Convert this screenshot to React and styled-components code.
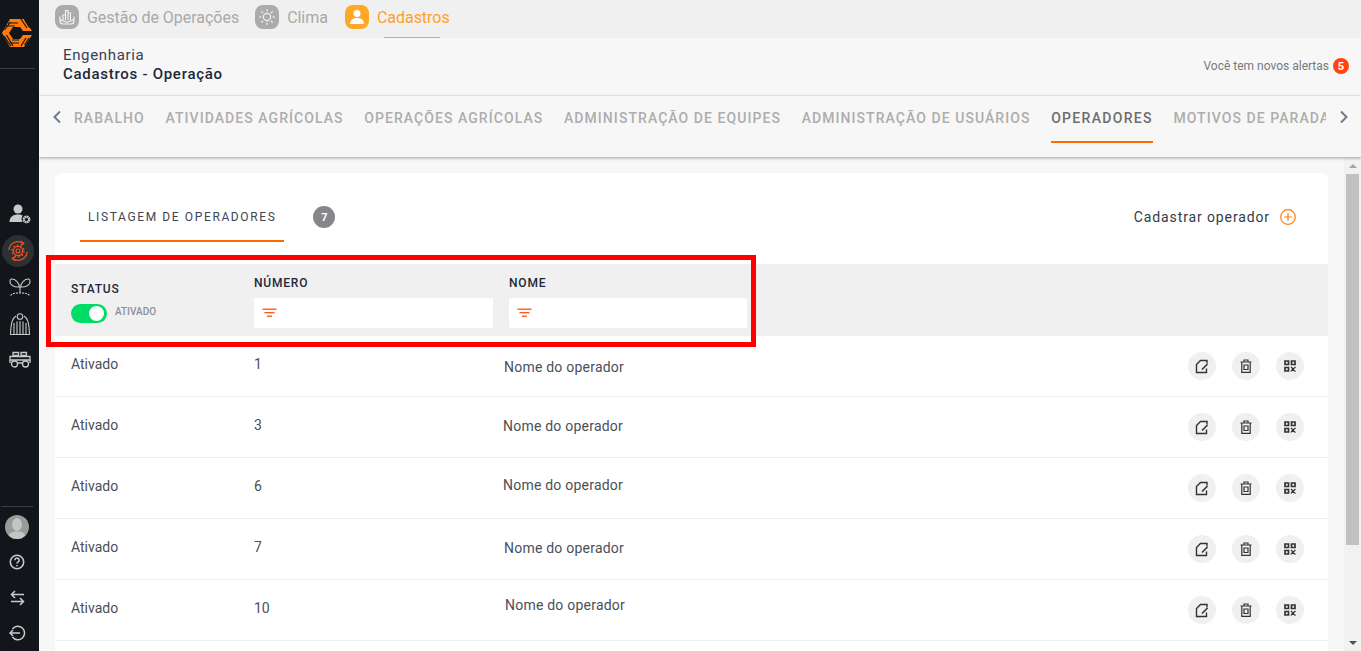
import React from 'react';
import styled, { createGlobalStyle } from 'styled-components';

const ORANGE = '#ff6a00';

const GlobalStyle = createGlobalStyle`
    html, body, #root {
        margin: 0;
        height: 100%;
    }
    body {
        font-family: Roboto, "Open Sans", Arial, sans-serif;
        color: #2b3240;
        overflow: hidden;
    }
`;

const Shell = styled.div`
    display: flex;
    height: 100vh;
    position: relative;
`;

/* sidebar */
const Sidebar = styled.aside`
    width: 39px;
    flex: none;
    background: #12161b;
    display: flex;
    flex-direction: column;
`;

const LogoBox = styled.div`
    height: 69px;
    margin-right: 4px;
    border-bottom: 1px solid #3a3d41;
    display: flex;
    align-items: flex-start;
    padding: 18px 0 0 1px;
    box-sizing: border-box;
`;

const SideNav = styled.nav`
    padding-top: 127px;
    display: flex;
    flex-direction: column;
`;

const SideItem = styled.div`
    height: 36.5px;
    display: flex;
    align-items: center;
    justify-content: center;
    color: #c9c9c9;
`;

const ActiveRing = styled.div`
    width: 32px;
    height: 32px;
    border-radius: 50%;
    background: #2c3034;
    display: flex;
    align-items: center;
    justify-content: center;
    margin-left: -4px;
`;

const SideFooter = styled.div`
    margin-top: auto;
    margin-right: 6px;
    margin-left: 1px;
    border-top: 1px solid #3a3d41;
    padding-top: 2px;
    display: flex;
    flex-direction: column;
    align-items: center;
`;

const FootItem = styled.div`
    height: 35.5px;
    display: flex;
    align-items: center;
    justify-content: center;
    color: #c9c9c9;
`;

const Avatar = styled.div`
    width: 24px;
    height: 24px;
    border-radius: 50%;
    background: #9a9a9a;
    overflow: hidden;
`;

/* main column */
const Main = styled.div`
    flex: 1;
    min-width: 0;
    display: flex;
    flex-direction: column;
    background: #f7f7f7;
`;

const TopBar = styled.div`
    height: 38px;
    flex: none;
    background: #f0f0f0;
    display: flex;
    align-items: center;
    padding: 0 0 4px 16px;
    box-sizing: border-box;
`;

const TopItem = styled.div`
    display: flex;
    align-items: center;
    gap: 8px;
    margin-right: ${p => p.$gap}px;
    font-size: 16px;
    letter-spacing: -0.03px;
    color: ${p => (p.$active ? '#ffa024' : '#a9a9a9')};
    position: relative;
    height: 34px;

    ${p => p.$active && `
        &::after {
            content: '';
            position: absolute;
            left: 39px;
            width: 56px;
            bottom: -4px;
            height: 1px;
            background: #ffa024;
        }
    `}
`;

const TopIcon = styled.span`
    width: 24px;
    height: 24px;
    border-radius: 8px;
    background: ${p => (p.$active ? '#ffa726' : '#ababab')};
    display: flex;
    align-items: center;
    justify-content: center;
`;

const Header = styled.header`
    height: 58px;
    flex: none;
    display: flex;
    justify-content: space-between;
    padding: 8px 12px 0 24px;
    box-sizing: border-box;
    border-bottom: 1px solid #eeeeee;
`;

const Crumbs = styled.div`
    font-size: 15px;
    line-height: 19px;
    letter-spacing: 0.65px;
    color: #3a4050;
`;

const CrumbStrong = styled.div`
    font-weight: 500;
    letter-spacing: 0.72px;
    color: #1e2838;
`;

const Alerts = styled.div`
    display: flex;
    align-items: center;
    gap: 4px;
    font-size: 12px;
    color: #77797c;
    height: 40px;
`;

const AlertBadge = styled.span`
    width: 16px;
    height: 16px;
    border-radius: 50%;
    background: #ff4511;
    color: #fff;
    font-size: 11px;
    font-weight: 700;
    display: flex;
    align-items: center;
    justify-content: center;
`;

const TabBar = styled.div`
    height: 61px;
    flex: none;
    display: flex;
    align-items: flex-start;
    box-shadow: 0 1px 3px rgba(0, 0, 0, 0.35);
    position: relative;
    z-index: 1;
    padding-left: 13px;
`;

const Chevron = styled.div`
    width: 22px;
    flex: none;
    height: 42px;
    display: flex;
    align-items: center;
    color: #6d7c8d;
    margin-left: ${p => p.$offset || 0}px;
`;

const TabTrack = styled.div`
    width: 1252px;
    flex: none;
    display: flex;
    gap: 20.7px;
    overflow: hidden;
`;

const Tab = styled.div`
    flex: none;
    height: 47px;
    box-sizing: border-box;
    padding-top: 13px;
    font-size: 14px;
    line-height: 18px;
    font-weight: 500;
    letter-spacing: ${p => (p.$active ? '1.3px' : '1.06px')};
    white-space: nowrap;
    color: ${p => (p.$active ? '#6d6d6d' : '#adadad')};
    border-bottom: 2px solid ${p => (p.$active ? ORANGE : 'transparent')};
`;

const ContentRow = styled.div`
    flex: 1;
    min-height: 0;
    display: flex;
`;

const Scroller = styled.div`
    flex: 1;
    min-width: 0;
    overflow: hidden;
    padding: 16px 16px 0 16px;
`;

const ScrollRail = styled.div`
    width: 17px;
    flex: none;
    background: #f1f1f1;
    display: flex;
    flex-direction: column;
    align-items: center;
`;

const RailArrow = styled.div`
    height: 17px;
    flex: none;
    display: flex;
    align-items: center;
    margin-top: ${p => (p.$down ? 'auto' : '0')};

    &::before {
        content: '';
        border-left: 4.5px solid transparent;
        border-right: 4.5px solid transparent;
        ${p => (p.$down
            ? 'border-top: 4.5px solid #505050;'
            : 'border-bottom: 4.5px solid #a3a3a3;')}
    }
`;

const RailThumb = styled.div`
    width: 13px;
    height: 371px;
    flex: none;
    background: #c1c1c1;
`;

const Card = styled.section`
    background: #fff;
    border-radius: 8px 8px 0 0;
    overflow: hidden;
    height: 100%;
`;

const CardHead = styled.div`
    height: 91px;
    display: flex;
    align-items: flex-start;
    padding: 0 32px 0 25px;
`;

const ListTab = styled.div`
    height: 69px;
    box-sizing: border-box;
    padding: 36px 8px 0 8px;
    font-size: 12px;
    line-height: 17px;
    letter-spacing: 1.62px;
    color: #3d4552;
    border-bottom: 2px solid ${ORANGE};
`;

const CountBadge = styled.span`
    width: 22px;
    height: 22px;
    border-radius: 50%;
    background: #85878a;
    color: #fff;
    font-size: 11px;
    font-weight: 700;
    display: flex;
    align-items: center;
    justify-content: center;
    margin: 33px 0 0 29px;
`;

const AddLink = styled.div`
    margin: 33px 0 0 auto;
    display: flex;
    align-items: center;
    gap: 10px;
    height: 22px;
    font-size: 14px;
    letter-spacing: 0.88px;
    color: #333b49;
`;

const FilterBand = styled.div`
    height: 72px;
    background: #f0f0f0;
    display: grid;
    grid-template-columns: 183px 255px 238px;
    padding-left: 16px;
    align-items: start;
`;

const StatusCol = styled.div`
    padding-top: 18px;
`;

const FilterLabel = styled.div`
    font-size: 12px;
    line-height: 15px;
    font-weight: 500;
    letter-spacing: 0.8px;
    color: #1e2838;
`;

const ToggleRow = styled.div`
    display: flex;
    align-items: center;
    gap: 8px;
    margin-top: 7px;
`;

const Toggle = styled.div`
    width: 36px;
    height: 19px;
    border-radius: 10px;
    background: #00dd66;
    display: flex;
    justify-content: flex-end;
    align-items: center;
    padding-right: 3px;
    box-sizing: border-box;
`;

const Knob = styled.span`
    width: 15px;
    height: 15px;
    border-radius: 50%;
    background: #fff;
`;

const ToggleText = styled.span`
    font-size: 10px;
    font-weight: 500;
    color: #8b8e93;
    margin-bottom: 4px;
`;

const FilterCol = styled.div`
    padding-top: 12px;
`;

const FilterInput = styled.div`
    width: ${p => p.$width}px;
    height: 30px;
    margin-top: 7px;
    background: #fff;
    border-radius: 2px;
    display: flex;
    align-items: center;
    padding-left: 8px;
    box-sizing: border-box;
`;

const Row = styled.div`
    height: 61px;
    box-sizing: border-box;
    border-bottom: 1px solid #eeeeee;
    display: grid;
    grid-template-columns: 183px 249px 1fr auto;
    padding: 0 24px 0 16px;
    align-items: start;
    font-size: 14px;
    line-height: 18px;
    color: #4a4f58;
`;

const Cell = styled.div`
    padding-top: 19px;
`;

const NameCell = styled.div`
    padding-top: ${p => p.$top}px;
    padding-left: ${p => p.$left}px;
    color: #4a4f58;
    letter-spacing: 0.22px;
`;

const Actions = styled.div`
    display: flex;
    gap: 16px;
    padding-top: 16px;
`;

const RoundButton = styled.button`
    width: 28px;
    height: 28px;
    padding: 0;
    border: none;
    border-radius: 50%;
    background: #f0f0f0;
    color: #3c3c3c;
    display: flex;
    align-items: center;
    justify-content: center;
`;

const Highlight = styled.div`
    position: absolute;
    left: 46px;
    top: 255px;
    width: 710px;
    height: 92px;
    box-sizing: border-box;
    border: 5px solid #ff0000;
    pointer-events: none;
    z-index: 2;
`;

/* icons */
const Logo = () => (
    <svg width="32" height="30" viewBox="0 0 32 30">
        <path d="M9 1h14l8 12h-9l-3-4h-7l-4 6 4 6h7l3-4h9l-8 12H9L1 15z" fill="#ff7a0a" />
        <g stroke="#12161b" strokeWidth="1.200" fill="none">
            <path d="M7 5h10M5 8h9M20 1l6 9M23.500 1.500l5 8M3.500 12l6-8" />
            <path d="M3 18l7 10M5.500 17l6.500 11M9 25h9M11 22h7M20 28l5-8M23.500 27l4.500-7" />
        </g>
    </svg>
);

const UserGear = () => (
    <svg width="24" height="22" viewBox="0 0 24 22" fill="#c9c9c9">
        <circle cx="10" cy="6" r="4.500" />
        <path d="M1.500 19c0-5 3.500-7.500 8.500-7.500 2 0 3.500.4 4.800 1.100-1.500 1.600-1.700 4.400-.3 6.400z" />
        <circle cx="18.500" cy="16.500" r="2.700" fill="none" stroke="#c9c9c9" strokeWidth="2.400" strokeDasharray="1.700 .4" />
    </svg>
);

const GearCycle = () => (
    <svg width="24" height="24" viewBox="0 0 24 24" fill="none" stroke="#f4511e" strokeWidth="1.200">
        <circle cx="12" cy="12" r="2" />
        <circle cx="12" cy="12" r="4.700" />
        <circle cx="12" cy="12" r="5.900" strokeWidth="1.400" strokeDasharray="1.500 2.200" />
        <path d="M2.800 11A9.300 9.300 0 0 1 17.500 4.500M21.200 13A9.300 9.300 0 0 1 6.500 19.500" />
        <path d="M15 2.300l2.800 2.300-2.900 1.500M9 21.700l-2.800-2.300 2.900-1.500" />
    </svg>
);

const Sprout = () => (
    <svg width="22" height="20" viewBox="0 0 22 20" fill="none" stroke="#c9c9c9" strokeWidth="1.100">
        <path d="M10.500 10C10 5.500 6.500 2 2.500 2 1 2 1 3.500 1 5c0 3 4 5.500 9.500 5zM11.500 10c.5-4.500 4-8 8-8 1.500 0 1.500 1.500 1.500 3 0 3-4 5.500-9.500 5z" />
        <path d="M11 10v6" />
        <path d="M1.500 18.500c2-2.500 6-2.500 9.500-2.500s7.500 0 9.500 2.500" strokeDasharray="2 1" />
    </svg>
);

const Silo = () => (
    <svg width="22" height="24" viewBox="0 0 22 24" fill="none" stroke="#c9c9c9" strokeWidth="1.100">
        <circle cx="11" cy="4.500" r="2.800" />
        <path d="M7 4C3.500 6 2 10 1.500 22.500h19C20 10 18.500 6 15 4" />
        <path d="M5 22.500V11M8 22.500V9.500M11 22.500V9M14 22.500V9.500M17 22.500V11" />
    </svg>
);

const Tractor = () => (
    <svg width="22" height="18" viewBox="0 0 22 18" fill="none" stroke="#c9c9c9" strokeWidth="1.300">
        <path d="M4 1.500h5.500v3H4zM12 1.500h5.500v3H12z" />
        <path d="M1 5.500h20v3.500H1z" />
        <circle cx="5.500" cy="13" r="3" />
        <circle cx="16.500" cy="13" r="3" />
        <path d="M1 9v3M21 9v3M8.500 12h5" />
    </svg>
);

const AvatarFace = () => (
    <svg width="24" height="24" viewBox="0 0 24 24" fill="#c4c4c4">
        <ellipse cx="12" cy="9.500" rx="5" ry="6.500" />
        <path d="M3 24c0-6 4-7.500 9-7.500s9 1.500 9 7.500z" />
    </svg>
);

const Help = () => (
    <svg width="16" height="16" viewBox="0 0 16 16" fill="none" stroke="#c9c9c9" strokeWidth="1.600">
        <circle cx="8" cy="8" r="6.700" />
        <path d="M5.900 6.200a2.100 2.100 0 1 1 3.300 1.700c-.8.500-1.200.9-1.200 1.700" />
        <path d="M8 11v1.300" />
    </svg>
);

const Swap = () => (
    <svg width="15" height="16" viewBox="0 0 15 16" fill="none" stroke="#c9c9c9" strokeWidth="1.500">
        <path d="M14 4.500H1.500M5 1L1.500 4.500 5 8M1 11.500h12.500M10 8l3.500 3.500L10 15" />
    </svg>
);

const Exit = () => (
    <svg width="17" height="16" viewBox="0 0 17 16" fill="none" stroke="#c9c9c9" strokeWidth="1.500">
        <path d="M3.500 4a6.700 6.700 0 1 1 0 8" />
        <path d="M11 8H1M4 5L1 8l3 3" />
    </svg>
);

const HandChart = () => (
    <svg width="18" height="18" viewBox="0 0 18 18" fill="none" stroke="#f5f5f5" strokeWidth="1.100">
        <path d="M2 8.500V13c0 2 1 3 3 3h8c2 0 3-1 3-3V8.500" />
        <path d="M5 12V7h2.500v5M7.500 12V2.500H10V12M10 12V5h2.500v7" />
        <path d="M2 11c1 2 2.500 2 4 2l3 1.500 3-1.500c1.500 0 3 0 4-2" />
    </svg>
);

const Sun = () => (
    <svg width="18" height="18" viewBox="0 0 18 18" fill="none" stroke="#f5f5f5" strokeWidth="1.100">
        <circle cx="9" cy="9" r="3.600" />
        <path d="M9 1v2.500M9 14.500V17M1 9h2.500M14.500 9H17M3.300 3.300l1.800 1.800M12.900 12.900l1.800 1.800M3.300 14.700l1.800-1.800M12.900 5.100l1.800-1.800" />
    </svg>
);

const PersonFill = () => (
    <svg width="18" height="18" viewBox="0 0 18 18" fill="#fff">
        <circle cx="9" cy="5.500" r="3.500" />
        <path d="M2 16c0-4 3-6 7-6s7 2 7 6z" />
    </svg>
);

const ChevronIcon = ({ dir }) => (
    <svg width="10" height="14" viewBox="0 0 10 14" fill="none" stroke="currentColor" strokeWidth="2">
        <path d={dir === 'left' ? 'M8 1.500L2.500 7 8 12.500' : 'M2 1.500L7.500 7 2 12.500'} />
    </svg>
);

const PlusCircle = () => (
    <svg width="16" height="16" viewBox="0 0 16 16" fill="none" stroke="#ff7a0a" strokeWidth="1.200">
        <circle cx="8" cy="8" r="7.300" />
        <path d="M8 4.300v7.400M4.300 8h7.400" />
    </svg>
);

const FilterIcon = () => (
    <svg width="15" height="10" viewBox="0 0 15 10" fill="#ff5a1a">
        <rect x="0.500" y="0.500" width="14" height="1.400" />
        <rect x="2.500" y="4" width="10" height="1.400" />
        <rect x="5" y="7.500" width="5" height="1.400" />
    </svg>
);

const EditIcon = () => (
    <svg width="14" height="15" viewBox="0 0 14 15" fill="none" stroke="#333" strokeWidth="1.400">
        <path d="M12 4.500V1.500H5.500L1.500 5.500v8h10V9.500" />
        <path d="M7 10.500l5.500-5.500" strokeWidth="1.600" />
    </svg>
);

const TrashIcon = () => (
    <svg width="12" height="14" viewBox="0 0 12 14" fill="none" stroke="#333" strokeWidth="1.200">
        <path d="M.5 3h11M4 3V1h4v2M1.800 3v10.300h8.400V3" />
        <path d="M4 6h4v4.500H4z" />
    </svg>
);

const QrIcon = () => (
    <svg width="12" height="12" viewBox="0 0 12 12" fill="none" stroke="#333" strokeWidth="1.700">
        <path d="M1 1h3.500v3.500H1zM7.500 1H11v3.500H7.500zM1 7.500h3.500V11H1z" />
        <path d="M7 7l1.700 1.700L7 11.500M11.500 7L8.700 9.500l2.800 2" strokeWidth="1.200" />
    </svg>
);

const tabs = [
    'RABALHO',
    'ATIVIDADES AGRÍCOLAS',
    'OPERAÇÕES AGRÍCOLAS',
    'ADMINISTRAÇÃO DE EQUIPES',
    'ADMINISTRAÇÃO DE USUÁRIOS',
    'OPERADORES',
    'MOTIVOS DE PARADA',
];

const operators = [
    { num: 1, top: 22, left: 1 },
    { num: 3, top: 20, left: 0 },
    { num: 6, top: 18, left: 0 },
    { num: 7, top: 20, left: 1 },
    { num: 10, top: 16, left: 2 },
];

const App = () => {
    return (
        <Shell>
            <GlobalStyle />
            <Sidebar>
                <LogoBox><Logo /></LogoBox>
                <SideNav>
                    <SideItem><UserGear /></SideItem>
                    <SideItem><ActiveRing><GearCycle /></ActiveRing></SideItem>
                    <SideItem><Sprout /></SideItem>
                    <SideItem><Silo /></SideItem>
                    <SideItem><Tractor /></SideItem>
                </SideNav>
                <SideFooter>
                    <FootItem><Avatar><AvatarFace /></Avatar></FootItem>
                    <FootItem><Help /></FootItem>
                    <FootItem><Swap /></FootItem>
                    <FootItem><Exit /></FootItem>
                </SideFooter>
            </Sidebar>

            <Main>
                <TopBar>
                    <TopItem $gap={16}><TopIcon><HandChart /></TopIcon>Gestão de Operações</TopItem>
                    <TopItem $gap={17}><TopIcon><Sun /></TopIcon>Clima</TopItem>
                    <TopItem $active><TopIcon $active><PersonFill /></TopIcon>Cadastros</TopItem>
                </TopBar>

                <Header>
                    <Crumbs>
                        Engenharia
                        <CrumbStrong>Cadastros - Operação</CrumbStrong>
                    </Crumbs>
                    <Alerts>Você tem novos alertas <AlertBadge>5</AlertBadge></Alerts>
                </Header>

                <TabBar>
                    <Chevron><ChevronIcon dir="left" /></Chevron>
                    <TabTrack>
                        {tabs.map(tab => (
                            <Tab key={tab} $active={tab === 'OPERADORES'}>{tab}</Tab>
                        ))}
                    </TabTrack>
                    <Chevron $offset={13}><ChevronIcon dir="right" /></Chevron>
                </TabBar>

                <ContentRow>
                    <Scroller>
                        <Card>
                            <CardHead>
                                <ListTab>LISTAGEM DE OPERADORES</ListTab>
                                <CountBadge>7</CountBadge>
                                <AddLink>Cadastrar operador <PlusCircle /></AddLink>
                            </CardHead>

                            <FilterBand>
                                <StatusCol>
                                    <FilterLabel>STATUS</FilterLabel>
                                    <ToggleRow>
                                        <Toggle><Knob /></Toggle>
                                        <ToggleText>ATIVADO</ToggleText>
                                    </ToggleRow>
                                </StatusCol>
                                <FilterCol>
                                    <FilterLabel>NÚMERO</FilterLabel>
                                    <FilterInput $width={239}><FilterIcon /></FilterInput>
                                </FilterCol>
                                <FilterCol>
                                    <FilterLabel>NOME</FilterLabel>
                                    <FilterInput $width={238}><FilterIcon /></FilterInput>
                                </FilterCol>
                            </FilterBand>

                            {operators.map(op => (
                                <Row key={op.num}>
                                    <Cell>Ativado</Cell>
                                    <Cell>{op.num}</Cell>
                                    <NameCell $top={op.top} $left={op.left}>Nome do operador</NameCell>
                                    <Actions>
                                        <RoundButton><EditIcon /></RoundButton>
                                        <RoundButton><TrashIcon /></RoundButton>
                                        <RoundButton><QrIcon /></RoundButton>
                                    </Actions>
                                </Row>
                            ))}
                        </Card>
                    </Scroller>
                    <ScrollRail>
                        <RailArrow />
                        <RailThumb />
                        <RailArrow $down />
                    </ScrollRail>
                </ContentRow>
            </Main>

            <Highlight />
        </Shell>
    );
};

export default App;
